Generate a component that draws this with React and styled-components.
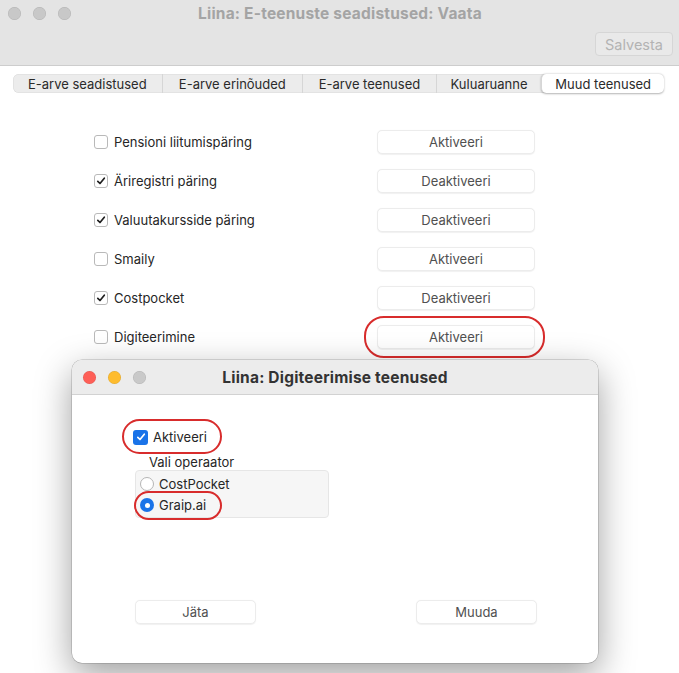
import React from 'react'
import styled, { createGlobalStyle, css } from 'styled-components'

const GlobalStyle = createGlobalStyle`
  html, body {
    margin: 0;
    padding: 0;
    background: #ffffff;
  }
  body {
    font-family: Inter, "Liberation Sans", "Noto Sans", sans-serif;
    -webkit-font-smoothing: antialiased;
  }
`

const Desktop = styled.div`
  position: relative;
  width: 679px;
  height: 673px;
  overflow: hidden;
  background: #ffffff;
`

const MainWindow = styled.div`
  display: flex;
  flex-direction: column;
  height: 100%;
`

const TitleBar = styled.div`
  height: 65px;
  background: #e4e4e4;
  border-bottom: 1px solid #cdcdcd;
  display: grid;
  grid-template-rows: 26px 1fr;
  padding: 0 6px 0 7px;
`

const TitleRow = styled.div`
  display: grid;
  grid-template-columns: 80px 1fr 80px;
  align-items: center;
`

const Lights = styled.div`
  display: flex;
  gap: 12px;
  padding-left: ${(p) => p.$pad || 0}px;
`

const Light = styled.span`
  width: 13px;
  height: 13px;
  border-radius: 50%;
  background: ${(p) => p.$color || '#c8c8c8'};
  box-shadow: inset 0 0 0 0.5px rgba(0, 0, 0, 0.12);
`

const Title = styled.div`
  text-align: center;
  font-size: 15.5px;
  letter-spacing: 0.2px;
  font-weight: 700;
  color: ${(p) => p.$color || '#a4a4a4'};
`

const Toolbar = styled.div`
  display: flex;
  justify-content: flex-end;
  align-items: flex-start;
  padding-top: 6px;
`

const SaveButton = styled.button`
  font: inherit;
  font-size: 14.5px;
  color: #b3b3b3;
  background: #e9e9e9;
  border: 1px solid #d6d6d6;
  border-radius: 4px;
  height: 24px;
  width: 78px;
  padding: 0;
`

const Tabs = styled.div`
  margin: 8px 0 0 13px;
  width: 651px;
  height: 19px;
  display: flex;
  align-items: center;
  background: #ececec;
  border-radius: 6px;
  box-shadow: inset 0 0 0 0.5px #d9d9d9;
`

const Tab = styled.div`
  height: 19px;
  display: flex;
  align-items: center;
  justify-content: center;
  width: ${(p) => p.$w}px;
  font-size: 13px;
  color: #2a2a2a;
  ${(p) =>
    p.$active
      ? css`
          background: #ffffff;
          border-radius: 5px;
          box-shadow: 0 0.5px 2px rgba(0, 0, 0, 0.3);
        `
      : css`
          & + & {
            border-left: 1px solid #d6d6d6;
          }
        `}
`

const Services = styled.div`
  margin: 29px 0 0 94px;
  display: grid;
  grid-template-columns: 283px 158px;
  grid-auto-rows: 39px;
  align-items: center;
`

const CheckLabel = styled.label`
  display: flex;
  align-items: center;
  height: 16px;
  gap: ${(p) => p.$gap || 7}px;
  font-size: 13px;
  color: #262626;
`

const Box = styled.span`
  width: ${(p) => (p.$blue ? 15 : 14)}px;
  height: ${(p) => (p.$blue ? 15 : 14)}px;
  box-sizing: border-box;
  border-radius: 3px;
  display: inline-flex;
  align-items: center;
  justify-content: center;
  ${(p) =>
    p.$blue
      ? css`
          background: #1a73e8;
          border: none;
        `
      : css`
          background: #ffffff;
          border: 1px solid #b9b9b9;
        `}
`

const PushButton = styled.button`
  font: inherit;
  font-size: 13px;
  color: #505050;
  background: #ffffff;
  border: 1px solid #ececec;
  border-radius: 5px;
  height: 24px;
  width: ${(p) => p.$w || 158}px;
  box-shadow: 0 0.5px 1px rgba(0, 0, 0, 0.06);
`

const Marked = styled.span`
  position: relative;
  display: flex;
  width: fit-content;
  &::after {
    content: '';
    position: absolute;
    top: -${(p) => p.$t}px;
    bottom: -${(p) => p.$b}px;
    left: -${(p) => p.$l}px;
    right: -${(p) => p.$r}px;
    border: 2px solid #d82c2c;
    border-radius: 20px;
    pointer-events: none;
  }
`

const Dialog = styled.div`
  position: absolute;
  left: 72px;
  top: 360px;
  width: 526px;
  height: 303px;
  background: #ffffff;
  border-radius: 10px;
  overflow: hidden;
  box-shadow: 0 12px 36px rgba(0, 0, 0, 0.38), 0 0 0 0.5px rgba(0, 0, 0, 0.25);
  display: flex;
  flex-direction: column;
`

const DialogBar = styled.div`
  height: 34px;
  background: #ececec;
  border-bottom: 1px solid #d2d2d2;
  display: grid;
  grid-template-columns: 90px 1fr 90px;
  align-items: center;
`

const DialogBody = styled.div`
  flex: 1;
  display: flex;
  flex-direction: column;
  padding: 34px 0 0 61px;
`

const Caption = styled.div`
  font-size: 13px;
  line-height: 16px;
  color: #262626;
  margin: 9px 0 0 16px;
`

const RadioGroup = styled.div`
  margin-left: 2px;
  width: 194px;
  height: 48px;
  box-sizing: border-box;
  background: #f6f6f6;
  border: 1px solid #e6e6e6;
  border-radius: 4px;
  padding: 5px 0 0 4px;
  display: flex;
  flex-direction: column;
  gap: 5px;
`

const Dot = styled.span`
  width: 14px;
  height: 14px;
  box-sizing: border-box;
  border-radius: 50%;
  display: inline-flex;
  align-items: center;
  justify-content: center;
  ${(p) =>
    p.$on
      ? css`
          background: #1a73e8;
          &::before {
            content: '';
            width: 5px;
            height: 5px;
            border-radius: 50%;
            background: #ffffff;
          }
        `
      : css`
          background: #ffffff;
          border: 1px solid #b5b5b5;
        `}
`

const DialogFooter = styled.div`
  margin-top: auto;
  display: flex;
  justify-content: space-between;
  padding: 0 61px 39px 63px;
`

const Check = ({ on, blue }) => (
  <Box $blue={blue}>
    {on && (
      <svg width="10" height="10" viewBox="0 0 10 10">
        <path
          d="M1.8 5.3 L4 7.5 L8.3 2.2"
          fill="none"
          stroke={blue ? '#ffffff' : '#1f1f1f'}
          strokeWidth="1.7"
          strokeLinecap="round"
          strokeLinejoin="round"
        />
      </svg>
    )}
  </Box>
)

const services = [
  { name: 'Pensioni liitumispäring', on: false },
  { name: 'Äriregistri päring', on: true },
  { name: 'Valuutakursside päring', on: true },
  { name: 'Smaily', on: false },
  { name: 'Costpocket', on: true },
  { name: 'Digiteerimine', on: false, marked: true },
]

const tabs = [
  { label: 'E-arve seadistused', w: 149 },
  { label: 'E-arve erinõuded', w: 140 },
  { label: 'E-arve teenused', w: 133 },
  { label: 'Kuluaruanne', w: 105 },
  { label: 'Muud teenused', w: 122, active: true },
]

export default function App() {
  return (
    <Desktop>
      <GlobalStyle />
      <MainWindow>
        <TitleBar>
          <TitleRow>
            <Lights $pad={1}>
              <Light />
              <Light />
              <Light />
            </Lights>
            <Title>Liina: E-teenuste seadistused: Vaata</Title>
            <span />
          </TitleRow>
          <Toolbar>
            <SaveButton>Salvesta</SaveButton>
          </Toolbar>
        </TitleBar>

        <Tabs>
          {tabs.map((t) => (
            <Tab key={t.label} $w={t.w} $active={t.active}>
              {t.label}
            </Tab>
          ))}
        </Tabs>

        <Services>
          {services.map((s) => (
            <React.Fragment key={s.name}>
              <CheckLabel $gap={6}>
                <Check on={s.on} />
                {s.name}
              </CheckLabel>
              {s.marked ? (
                <Marked $t={9} $b={9} $l={13} $r={10}>
                  <PushButton>Aktiveeri</PushButton>
                </Marked>
              ) : (
                <PushButton>{s.on ? 'Deaktiveeri' : 'Aktiveeri'}</PushButton>
              )}
            </React.Fragment>
          ))}
        </Services>
      </MainWindow>

      <Dialog>
        <DialogBar>
          <Lights $pad={11}>
            <Light $color="#fe5f57" />
            <Light $color="#febc2e" />
            <Light $color="#c9c9c9" />
          </Lights>
          <Title $color="#333333">Liina: Digiteerimise teenused</Title>
          <span />
        </DialogBar>
        <DialogBody>
          <Marked $t={10} $b={9} $l={11} $r={15}>
            <CheckLabel $gap={5}>
              <Check on blue />
              Aktiveeri
            </CheckLabel>
          </Marked>
          <Caption>Vali operaator</Caption>
          <RadioGroup>
            <CheckLabel $gap={5}>
              <Dot />
              CostPocket
            </CheckLabel>
            <Marked $t={6} $b={7} $l={6} $r={16}>
              <CheckLabel $gap={5}>
                <Dot $on />
                Graip.ai
              </CheckLabel>
            </Marked>
          </RadioGroup>
        </DialogBody>
        <DialogFooter>
          <PushButton $w={121}>Jäta</PushButton>
          <PushButton $w={121}>Muuda</PushButton>
        </DialogFooter>
      </Dialog>
    </Desktop>
  )
}
